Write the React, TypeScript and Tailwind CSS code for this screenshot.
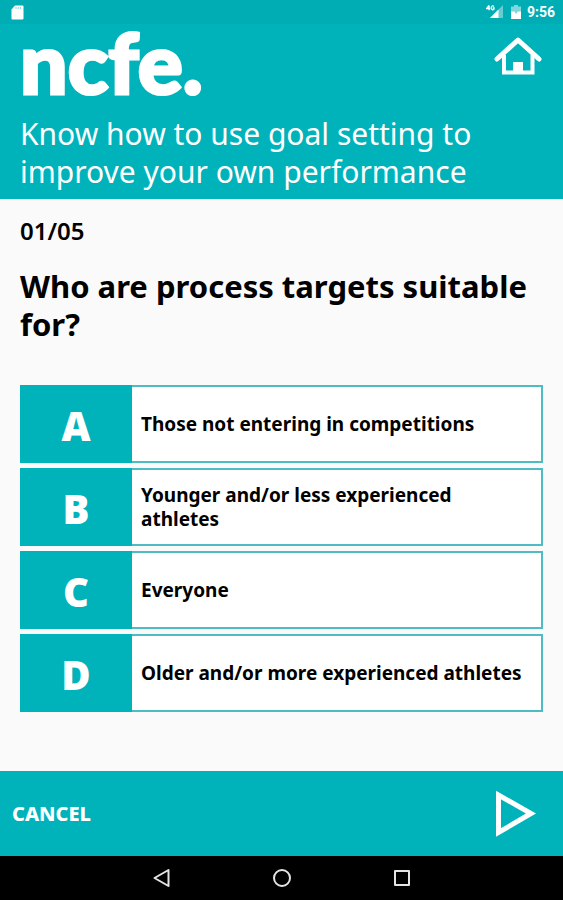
import React from 'react';

type Option = {
    letter: string;
    text: string;
};

const options: Option[] = [
    { letter: 'A', text: 'Those not entering in competitions' },
    { letter: 'B', text: 'Younger and/or less experienced athletes' },
    { letter: 'C', text: 'Everyone' },
    { letter: 'D', text: 'Older and/or more experienced athletes' },
];

const StatusBar: React.FC = () => (
    <div className="flex h-6 items-center justify-between bg-[#00adb4] pl-[11px] pr-2 text-white">
        <svg width="13" height="15" viewBox="0 0 13 15" fill="currentColor" aria-hidden="true">
            <path d="M4 0.5h7.5a1 1 0 0 1 1 1v12a1 1 0 0 1-1 1h-10a1 1 0 0 1-1-1V4.5z" />
            <path d="M5 2v2M7.2 2v2M9.4 2v2" stroke="#00adb4" strokeWidth="0.8" opacity="0.6" />
        </svg>
        <div className="flex items-center">
            <svg className="mr-2" width="17" height="14" viewBox="0 0 17 14" fill="currentColor" aria-hidden="true">
                <path d="M17 0v13H4z" opacity="0.4" />
                <path d="M12.5 4.5V13H4z" />
                <path d="M3 0.5L0.6 3.6h3.6M3.1 0.5v4.7M8 1.4C6.8 0.2 5.2 1 5.2 2.8S7 5.4 8 4.2V3H6.8" fill="none" stroke="currentColor" strokeWidth="1.3" />
            </svg>
            <svg className="mr-[6px]" width="10" height="14" viewBox="0 0 10 14" fill="currentColor" aria-hidden="true">
                <path d="M3 0h4v1.500h3V14H0V1.500h3z" opacity="0.5" />
                <path d="M0 6.500h3.500L5 9l2-2.500H10V14H0z" />
            </svg>
            <span className="font-[Roboto] text-[14px] font-bold leading-4">9:56</span>
        </div>
    </div>
);

const Header: React.FC = () => (
    <header className="bg-[#00b3bb] px-5 pb-2 text-white">
        <div className="flex h-[91px] items-start justify-between">
            <span className="font-[Lato] text-[84px] font-black leading-[76px] [-webkit-text-stroke:3px_white]">ncfe.</span>
            <button type="button" aria-label="Home" className="mt-3">
                <svg width="50" height="40" viewBox="0 0 50 40" fill="none" stroke="currentColor" aria-hidden="true">
                    <path d="M4 23L25 4L46 23" strokeWidth="5" strokeLinecap="round" strokeLinejoin="round" />
                    <path d="M11 19V36.500H39.500V19" strokeWidth="4" />
                    <path d="M20 26h10V37H20z" fill="currentColor" stroke="none" />
                </svg>
            </button>
        </div>
        <h1 className="font-['Noto_Sans'] text-[30px] font-normal leading-[38px]">
            Know how to use goal setting to improve your own performance
        </h1>
    </header>
);

const App: React.FC = () => {
    return (
        <div className="flex min-h-screen flex-col bg-[#fafafa] font-['Noto_Sans',sans-serif]">
            <StatusBar />
            <Header />
            <main className="flex-1 px-5 pt-4 pb-10 text-black">
                <p className="text-[24px] font-semibold leading-8">01/05</p>
                <h2 className="mt-5 text-[31px] font-bold leading-[38px]">
                    Who are process targets suitable for?
                </h2>
                <div className="mt-[42px] flex flex-col gap-[5px]">
                    {options.map((option) => (
                        <button
                            key={option.letter}
                            type="button"
                            className="flex min-h-[78px] w-full bg-white text-left"
                        >
                            <span className="flex w-28 shrink-0 items-center justify-center self-stretch bg-[#00b3bb] pt-1 font-['Open_Sans'] text-[40px] font-extrabold leading-10 text-white">
                                {option.letter}
                            </span>
                            <span className="flex flex-1 items-center self-stretch border-2 border-l-0 border-[#4dbcc3] pl-[9px] pr-3 text-[19px] font-bold leading-6">
                                {option.text}
                            </span>
                        </button>
                    ))}
                </div>
            </main>
            <footer className="flex h-[85px] items-center justify-between bg-[#00b3bb] pl-3 pr-[26px] text-white">
                <button type="button" className="text-[20px] font-extrabold">CANCEL</button>
                <button type="button" aria-label="Next">
                    <svg width="42" height="48" viewBox="0 0 42 48" fill="none" stroke="currentColor" strokeWidth="5" aria-hidden="true">
                        <path d="M3.500 5V42.500L36 23.500z" />
                    </svg>
                </button>
            </footer>
            <nav className="flex h-11 items-center justify-center gap-[100px] bg-black text-[#e4e4e4]">
                <button type="button" aria-label="Back">
                    <svg width="20" height="20" viewBox="0 0 20 20" fill="none" stroke="currentColor" strokeWidth="2" strokeLinejoin="round" aria-hidden="true">
                        <path d="M16.500 2V18L2.500 10z" />
                    </svg>
                </button>
                <button type="button" aria-label="Home screen">
                    <svg width="20" height="20" viewBox="0 0 20 20" fill="none" stroke="currentColor" strokeWidth="2" aria-hidden="true">
                        <circle cx="10" cy="10" r="8" />
                    </svg>
                </button>
                <button type="button" aria-label="Recent apps">
                    <svg width="20" height="20" viewBox="0 0 20 20" fill="none" stroke="currentColor" strokeWidth="2" strokeLinejoin="round" aria-hidden="true">
                        <path d="M3 3h14v14H3z" />
                    </svg>
                </button>
            </nav>
        </div>
    );
};

export default App;
